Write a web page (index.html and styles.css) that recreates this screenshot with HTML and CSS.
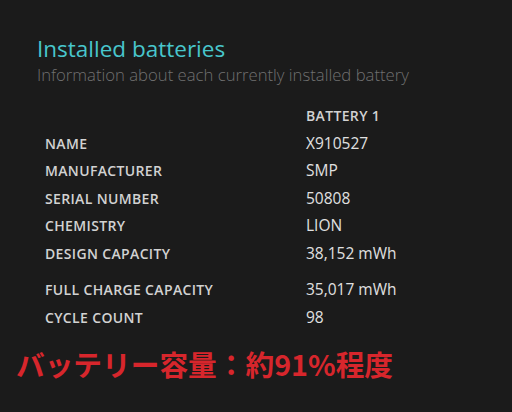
FILE: index.html
```html
<!DOCTYPE html>
<html>
<head>
<meta charset="utf-8">
<link rel="stylesheet" href="styles.css">
</head>
<body>
<div class="page">
  <h1 class="title">Installed batteries</h1>
  <p class="subtitle">Information about each currently installed battery</p>
  <div class="table">
    <div class="label"></div><div class="head">BATTERY 1</div>
    <div class="label">NAME</div><div class="value">X910527</div>
    <div class="label">MANUFACTURER</div><div class="value">SMP</div>
    <div class="label">SERIAL NUMBER</div><div class="value">50808</div>
    <div class="label">CHEMISTRY</div><div class="value">LION</div>
    <div class="label">DESIGN CAPACITY</div><div class="value">38,152 mWh</div>
    <div class="label spaced">FULL CHARGE CAPACITY</div><div class="value spaced">35,017 mWh</div>
    <div class="label">CYCLE COUNT</div><div class="value">98</div>
  </div>
  <p class="note">バッテリー容量：約91%程度</p>
</div>
</body>
</html>
```
FILE: styles.css
```css
html, body {
  margin: 0;
  padding: 0;
  background: #1b1b1b;
}
.page {
  width: 512px;
  height: 412px;
  box-sizing: border-box;
  padding: 35px 0 0 37px;
  font-family: "Open Sans", "Noto Sans", sans-serif;
  overflow: hidden;
}
.title {
  margin: 0;
  font-size: 22.5px;
  font-weight: 400;
  color: #48c6cc;
  line-height: 27px;
}
.subtitle {
  margin: 0;
  font-size: 16.7px;
  font-weight: 300;
  color: #707070;
  line-height: 25px;
}
.table {
  display: grid;
  grid-template-columns: 261px auto;
  margin: 15px 0 0 8px;
}
.label, .value, .head {
  height: 27.5px;
  line-height: 27.5px;
  white-space: nowrap;
}
.label, .head {
  font-size: 14px;
  font-weight: 600;
  color: #d2d2d2;
  letter-spacing: 0.35px;
}
.value {
  font-size: 15.5px;
  color: #e0e0e0;
}
.spaced {
  margin-top: 9px;
}
.note {
  margin: 15px 0 0 -21px;
  font-family: "Noto Sans CJK JP", sans-serif;
  font-weight: 700;
  font-size: 28.7px;
  line-height: 36px;
  color: #d7262c;
  white-space: nowrap;
}
```
